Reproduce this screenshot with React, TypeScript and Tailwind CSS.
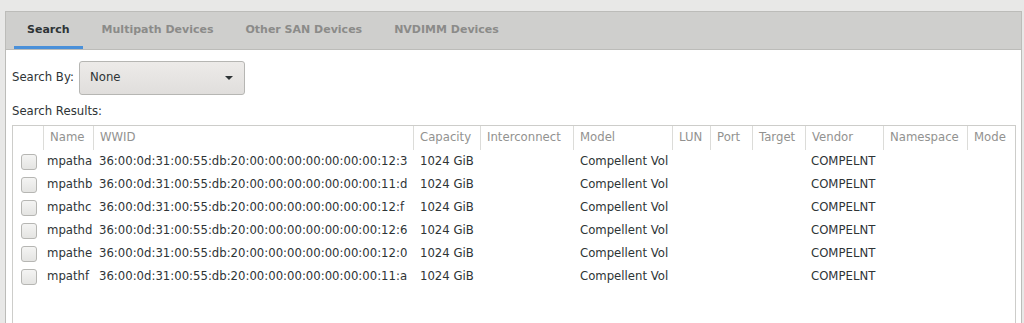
import React from 'react';

const columns = [
  { label: '', width: 30 },
  { label: 'Name', width: 50 },
  { label: 'WWID', width: 320 },
  { label: 'Capacity', width: 67 },
  { label: 'Interconnect', width: 93 },
  { label: 'Model', width: 99 },
  { label: 'LUN', width: 38 },
  { label: 'Port', width: 42 },
  { label: 'Target', width: 53 },
  { label: 'Vendor', width: 78 },
  { label: 'Namespace', width: 84 },
  { label: 'Mode', width: 49 },
];

const gridCols =
  'grid grid-cols-[30px_50px_320px_67px_93px_99px_38px_42px_53px_78px_84px_49px]';

const devices = [
  { name: 'mpatha', wwid: '36:00:0d:31:00:55:db:20:00:00:00:00:00:00:00:12:3' },
  { name: 'mpathb', wwid: '36:00:0d:31:00:55:db:20:00:00:00:00:00:00:00:11:d' },
  { name: 'mpathc', wwid: '36:00:0d:31:00:55:db:20:00:00:00:00:00:00:00:12:f' },
  { name: 'mpathd', wwid: '36:00:0d:31:00:55:db:20:00:00:00:00:00:00:00:12:6' },
  { name: 'mpathe', wwid: '36:00:0d:31:00:55:db:20:00:00:00:00:00:00:00:12:0' },
  { name: 'mpathf', wwid: '36:00:0d:31:00:55:db:20:00:00:00:00:00:00:00:11:a' },
];

const tabs = ['Search', 'Multipath Devices', 'Other SAN Devices', 'NVDIMM Devices'];

const App: React.FC = () => {
  return (
    <div className="w-[1024px] h-[323px] overflow-hidden bg-[#e8e8e7] pt-[11px] font-['DejaVu_Sans',sans-serif] text-[11.7px] text-[#2e3436]">
      {/* notebook panel */}
      <div className="ml-[5px] w-[1017px] h-[320px] border border-[#bcbcb9] bg-white flex flex-col">
        <div className="h-[38px] shrink-0 bg-[#cfcfcd] border-b border-[#bcbcb9] flex items-stretch pl-[8px] gap-[6px]">
          {tabs.map((tab, i) => (
            <div
              key={tab}
              className={
                i === 0
                  ? 'px-[13px] flex items-center font-bold text-[11px] text-[#2e3436] border-b-[3px] border-[#4a90d9] pt-[3px]'
                  : 'px-[13px] flex items-center font-bold text-[11px] text-[#8b8b89] border-b-[3px] border-transparent pt-[3px]'
              }
            >
              {tab}
            </div>
          ))}
        </div>

        <div className="pl-[6px] pr-[5px] flex flex-col">
          <div className="flex items-center mt-[11px] h-[34px]">
            <span className="w-[67px]">Search By:</span>
            <button className="w-[166px] h-[34px] rounded-[3px] border border-[#b6b6b3] bg-gradient-to-b from-[#edebe9] to-[#e0dedc] flex items-center justify-between pl-[10px] pr-[11px] text-[#2e3436]">
              <span>None</span>
              <span className="w-0 h-0 border-l-[4px] border-r-[4px] border-t-[4px] border-l-transparent border-r-transparent border-t-[#2e3436]" />
            </button>
          </div>

          <div className="mt-[8px] h-[16px] leading-[16px]">Search Results:</div>

          <div className="mt-[6px] border border-[#cdcdca] h-[200px]">
            <div className={`${gridCols} h-[24px] text-[#929290]`}>
              {columns.map((col, i) => (
                <div
                  key={i}
                  className={
                    i === 0
                      ? 'flex items-center'
                      : 'flex items-center pl-[6px] border-l border-[#dcdcd9] whitespace-nowrap overflow-hidden'
                  }
                >
                  {col.label}
                </div>
              ))}
            </div>

            {devices.map((d) => (
              <div key={d.name} className={`${gridCols} h-[23px] items-center whitespace-nowrap`}>
                <div className="flex items-center justify-center pl-[1px]">
                  <span className="w-[16px] h-[16px] rounded-[3px] border border-[#b6b6b3] bg-gradient-to-b from-[#f4f4f3] to-[#e4e4e2]" />
                </div>
                <div className="pl-[4px]">{d.name}</div>
                <div className="pl-[6px]">{d.wwid}</div>
                <div className="pl-[7px]">1024 GiB</div>
                <div />
                <div className="pl-[7px]">Compellent Vol</div>
                <div />
                <div />
                <div />
                <div className="pl-[6px]">COMPELNT</div>
                <div />
                <div />
              </div>
            ))}
          </div>
        </div>
      </div>
    </div>
  );
};

export default App;
